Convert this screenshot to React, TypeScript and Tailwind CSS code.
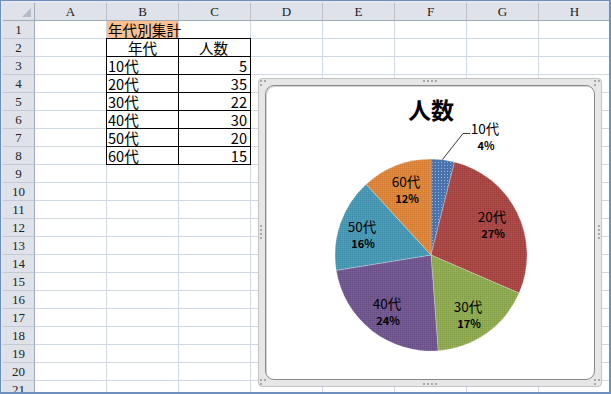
// Excel シート + 円グラフ「人数」
const cols = ["A", "B", "C", "D", "E", "F", "G", "H"];
const rows = Array.from({ length: 21 }, (_, i) => i + 1);
const data: [string, number][] = [
  ["10代", 5],
  ["20代", 35],
  ["30代", 22],
  ["40代", 30],
  ["50代", 20],
  ["60代", 15],
];

const hdr = "bg-[#dfe3e9] font-['Liberation_Serif',serif] text-[13px] text-[#222]";

function Cell({ r, c }: { r: number; c: string }) {
  const inTable = r >= 2 && r <= 8 && (c === "B" || c === "C");
  let text = "";
  let align = "justify-start";
  if (r === 1 && c === "B") text = "年代別集計";
  if (r === 2) {
    if (c === "B") text = "年代";
    if (c === "C") text = "人数";
    align = "justify-center";
  }
  if (r >= 3 && r <= 8) {
    if (c === "B") text = data[r - 3][0];
    if (c === "C") {
      text = String(data[r - 3][1]);
      align = "justify-end";
    }
  }
  let edge = "border-[#d0d7e5]";
  if (inTable) {
    edge = "border-black";
    if (r === 2 && c === "B") edge += " shadow-[-1px_0_0_#000,0_-1px_0_#000,-1px_-1px_0_#000]";
    else if (r === 2) edge += " shadow-[0_-1px_0_#000]";
    else if (c === "B") edge += " shadow-[-1px_0_0_#000]";
  }
  const bg = r === 1 && c === "B" ? "bg-[#fac090]" : "";
  return (
    <div
      className={`flex h-[18px] w-[72px] shrink-0 items-center overflow-visible whitespace-nowrap border-r border-b px-[1px] text-[14.6px] leading-[17px] text-black ${align} ${edge} ${bg} ${
        c === "C" ? "pr-[3px]" : ""
      }`}
    >
      {text}
    </div>
  );
}

function Sheet() {
  return (
    <div className="flex flex-col bg-white">
      <div className="flex h-[18px]">
        <div className="relative w-[32px] shrink-0 border-r border-b border-[#9eabbb] bg-[#dfe3e9]">
          <svg className="absolute right-[3px] bottom-[3px]" width="9" height="9">
            <path d="M9 0 L9 9 L0 9 Z" fill="#b5bcc7" />
          </svg>
        </div>
        {cols.map((c) => (
          <div
            key={c}
            className={`flex w-[72px] shrink-0 items-center justify-center border-r border-b border-r-[#b9c1cc] border-b-[#9eabbb] ${hdr}`}
          >
            {c}
          </div>
        ))}
      </div>
      {rows.map((r) => (
        <div key={r} className="flex h-[18px]">
          <div
            className={`flex w-[32px] shrink-0 items-center justify-center border-r border-b border-r-[#9eabbb] border-b-[#c3cad4] leading-[17px] ${hdr}`}
          >
            {r}
          </div>
          {cols.map((c) => (
            <Cell key={c} r={r} c={c} />
          ))}
        </div>
      ))}
    </div>
  );
}

const colors = ["#4a72ad", "#aa4543", "#8fab4f", "#705690", "#4699b5", "#e08538"];

function Pie() {
  const cx = 431;
  const cy = 255;
  const R = 96;
  const total = data.reduce((s, d) => s + d[1], 0);
  let acc = 0;
  const pt = (a: number) => `${(cx + R * Math.sin(a)).toFixed(2)} ${(cy - R * Math.cos(a)).toFixed(2)}`;
  const slices = data.map(([, v], i) => {
    const a0 = (acc / total) * Math.PI * 2;
    acc += v;
    const a1 = (acc / total) * Math.PI * 2;
    const large = a1 - a0 > Math.PI ? 1 : 0;
    return { d: `M${cx} ${cy} L${pt(a0)} A${R} ${R} 0 ${large} 1 ${pt(a1)} Z`, color: colors[i] };
  });

  const labels: [string, string, number, number, number][] = [
    ["10代", "4%", 485, 134, 150],
    ["20代", "27%", 492, 222, 238],
    ["30代", "17%", 468, 312, 328],
    ["40代", "24%", 387, 309, 325],
    ["50代", "16%", 362, 232, 248],
    ["60代", "12%", 406, 187, 203],
  ];

  return (
    <svg width="328" height="293" viewBox="266 86 328 293" className="block">
      <defs>
        <pattern id="dither" width="2" height="2" patternUnits="userSpaceOnUse">
          <rect width="1" height="1" fill="#000" fillOpacity="0.09" />
          <rect x="1" y="1" width="1" height="1" fill="#fff" fillOpacity="0.08" />
        </pattern>
        <pattern id="stipple" width="3" height="3" patternUnits="userSpaceOnUse">
          <rect width="1" height="1" fill="#a9c0e2" fillOpacity="0.8" />
        </pattern>
      </defs>
      <text
        x="431"
        y="119"
        textAnchor="middle"
        fontSize="23"
        fontWeight="700"
        fill="#000"
        fontFamily="'Noto Sans CJK JP', sans-serif"
      >
        人数
      </text>
      {slices.map((s, i) => (
        <g key={i}>
          <path d={s.d} fill={s.color} stroke="#ffffff" strokeOpacity="0.45" strokeWidth="0.6" />
          <path d={s.d} fill={i === 0 ? "url(#stipple)" : "url(#dither)"} />
        </g>
      ))}
      <polyline points="442.5,159.5 463,133.5 470,133.5" fill="none" stroke="#3a3a3a" strokeWidth="1" />
      {labels.map(([name, pct, x, y1, y2]) => (
        <g key={name} fontFamily="'Noto Sans CJK JP', sans-serif" textAnchor="middle" fill="#000">
          <text x={x} y={y1} fontSize="13.5">
            {name}
          </text>
          <text x={x + 1} y={y2} fontSize="11" fontWeight="700">
            {pct}
          </text>
        </g>
      ))}
    </svg>
  );
}

function Dots({ dir = "row" }: { dir?: "row" | "col" }) {
  return (
    <div className={`flex gap-[2px] ${dir === "col" ? "flex-col" : "flex-row"}`}>
      {[0, 1, 2, 3].map((i) => (
        <span key={i} className="h-[2px] w-[2px] bg-[#a8a8a8]" />
      ))}
    </div>
  );
}

function Corner() {
  return (
    <div className="grid grid-cols-[2px_2px] gap-[2px]">
      <span className="h-[2px] w-[2px] bg-[#a8a8a8]" />
      <span className="h-[2px] w-[2px] bg-[#a8a8a8]" />
      <span className="h-[2px] w-[2px] bg-[#a8a8a8]" />
    </div>
  );
}

function Chart() {
  return (
    <div className="absolute top-[75px] left-[255px] h-[309px] w-[344px] rounded-[4px] border border-[#c3c3c3] bg-[#e7e7e7] p-[6px]">
      <div className="h-full w-full overflow-hidden rounded-[9px] border border-[#8a8a8a] bg-white shadow-[inset_1px_1px_0_#d6d6d6]">
        <Pie />
      </div>
      <div className="absolute top-[1px] left-[164px]">
        <Dots />
      </div>
      <div className="absolute bottom-[1px] left-[164px]">
        <Dots />
      </div>
      <div className="absolute top-[146px] left-[1px]">
        <Dots dir="col" />
      </div>
      <div className="absolute top-[146px] right-[1px]">
        <Dots dir="col" />
      </div>
      <div className="absolute top-[1px] left-[1px]">
        <Corner />
      </div>
      <div className="absolute top-[1px] right-[1px]">
        <Corner />
      </div>
      <div className="absolute bottom-[1px] left-[1px]">
        <Corner />
      </div>
      <div className="absolute right-[1px] bottom-[1px]">
        <Corner />
      </div>
    </div>
  );
}

export default function App() {
  return (
    <div className="h-[394px] w-[611px] overflow-hidden border-t border-r-2 border-b-2 border-l border-[#6f8fbf] bg-[#e4e8ee] pt-[2px] pl-[2px] font-['Noto_Sans_CJK_JP',sans-serif]">
      <div className="relative bg-white">
        <Sheet />
        <Chart />
      </div>
    </div>
  );
}
